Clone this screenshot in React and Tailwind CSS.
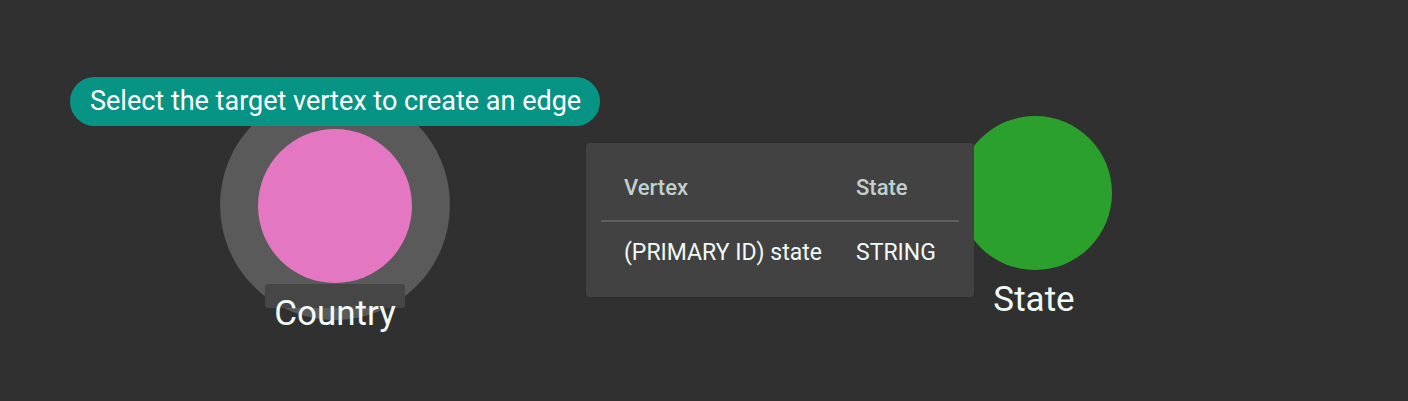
export default function App() {
  return (
    <div className="relative w-[1408px] h-[401px] overflow-hidden bg-[#303030]" style={{ fontFamily: "Roboto, 'Noto Sans', sans-serif" }}>
      {/* Country node */}
      <div className="absolute left-[220px] top-[90px] w-[230px] h-[230px] rounded-full bg-[#5a5a5a]" />
      <div className="absolute left-[258px] top-[129px] w-[154px] h-[154px] rounded-full bg-[#e377c2]" />
      <div className="absolute left-[265px] top-[284px] w-[140px] h-[24px] rounded-[3px] bg-[#464646]" />
      <div className="absolute left-[235px] top-[294px] w-[200px] text-center text-[35px] leading-[40px] text-[#f2faf8]">Country</div>

      {/* State node */}
      <div className="absolute left-[958px] top-[116px] w-[154px] h-[154px] rounded-full bg-[#2ca02c]" />
      <div className="absolute left-[934px] top-[280px] w-[200px] text-center text-[35px] leading-[40px] text-[#f2faf8]">State</div>

      {/* Tooltip pill */}
      <div className="absolute left-[70px] top-[77px] h-[49px] w-[530px] rounded-full bg-[#089484] flex items-center pl-[20px]">
        <span className="text-[27px] text-white leading-none whitespace-nowrap">Select the target vertex to create an edge</span>
      </div>

      {/* Info card */}
      <div className="absolute left-[586px] top-[143px] w-[388px] h-[154px] rounded-[4px] bg-[#424242] px-[15px] pt-[24px]">
        <div className="flex h-[40px] items-center text-[22px] font-medium text-[#c0d0cc]">
          <div className="w-[255px] pl-[23px]">Vertex</div>
          <div>State</div>
        </div>
        <div className="h-[2px] bg-[#5e5e5e] mt-[13px]" />
        <div className="flex h-[62px] items-center text-[23px] text-[#f2faf8]">
          <div className="w-[255px] pl-[23px] whitespace-nowrap">(PRIMARY ID) state</div>
          <div>STRING</div>
        </div>
      </div>
    </div>
  );
}
